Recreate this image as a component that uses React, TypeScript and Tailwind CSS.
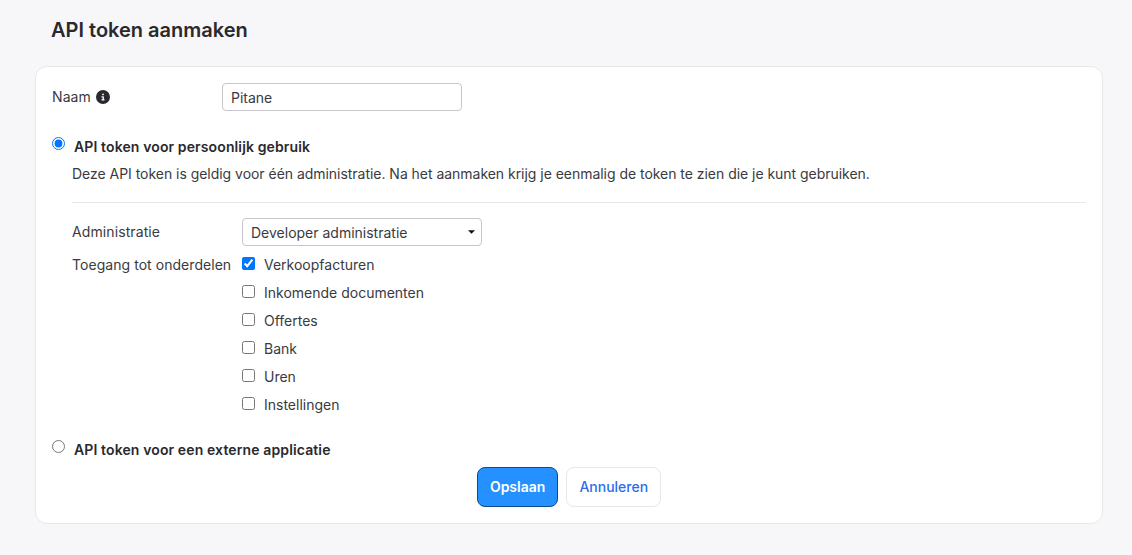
import React from 'react';

const onderdelen = [
  { label: 'Verkoopfacturen', checked: true },
  { label: 'Inkomende documenten', checked: false },
  { label: 'Offertes', checked: false },
  { label: 'Bank', checked: false },
  { label: 'Uren', checked: false },
  { label: 'Instellingen', checked: false },
];

const App = () => {
  return (
    <div className="min-h-screen bg-[#f7f7f9] px-[35px] pt-[18px] pb-[31px] text-[14px] leading-[20px] text-[#3a3a40] font-['Inter',sans-serif]">
      <h1 className="ml-[16px] h-[24px] text-[20px] leading-[24px] font-semibold text-[#29292e]">API token aanmaken</h1>

      <div className="mt-[24px] w-[1068px] h-[458px] rounded-[12px] border border-[#e8e8ec] bg-white px-[16px] pt-[16px]">
        {/* Naam */}
        <div className="flex items-start">
          <div className="flex w-[170px] items-center gap-[5px] pt-[4px]">
            <span className="tracking-[0.1px]">Naam</span>
            <svg viewBox="0 0 512 512" className="h-[14px] w-[14px] fill-[#29292e]">
              <path d="M256 512A256 256 0 1 0 256 0a256 256 0 1 0 0 512zM216 336h24V272H216c-13.3 0-24-10.700-24-24s10.700-24 24-24h48c13.300 0 24 10.700 24 24v88h8c13.300 0 24 10.700 24 24s-10.700 24-24 24H216c-13.300 0-24-10.700-24-24s10.700-24 24-24zm40-208a32 32 0 1 1 0 64 32 32 0 1 1 0-64z" />
            </svg>
          </div>
          <input
            defaultValue="Pitane"
            className="h-[28px] w-[240px] rounded-[4px] border border-[#c6c6cc] bg-white px-[8px] text-[14px] text-[#3a3a40] outline-none"
          />
        </div>

        {/* Persoonlijk gebruik */}
        <label className="mt-[24px] flex items-start">
          <input type="radio" name="soort" defaultChecked className="mt-[2px] h-[13px] w-[13px] m-0" />
          <span className="ml-[9px] pt-[2px] font-semibold tracking-[0.12px] text-[#29292e]">API token voor persoonlijk gebruik</span>
        </label>

        <div className="ml-[20px]">
          <p className="mt-[7px] tracking-[-0.033px]">
            Deze API token is geldig voor één administratie. Na het aanmaken krijg je eenmalig de token te zien die je kunt gebruiken.
          </p>
          <div className="mt-[18px] border-t border-[#e8e8ec]" />

          <div className="mt-[15px] flex items-start">
            <div className="w-[170px] pt-[4px] tracking-[0.1px]">Administratie</div>
            <div className="relative h-[28px] w-[240px]">
              <select className="h-[28px] w-[240px] appearance-none rounded-[4px] border border-[#c6c6cc] bg-white px-[8px] pt-[2px] text-[14px] text-[#3a3a40] outline-none">
                <option>Developer administratie</option>
              </select>
              {/* pijltje van de select */}
              <svg viewBox="0 0 8 4" className="pointer-events-none absolute right-[7px] top-[12px] h-[4px] w-[7px] fill-[#111]">
                <path d="M0 0h8L4 4z" />
              </svg>
            </div>
          </div>

          <div className="mt-[5px] flex items-start">
            <div className="w-[170px] pt-[4px] tracking-[0.05px]">Toegang tot onderdelen</div>
            <div className="flex flex-col gap-[8px] pt-[4px]">
              {onderdelen.map((onderdeel) => (
                <label key={onderdeel.label} className="flex items-start">
                  <input type="checkbox" defaultChecked={onderdeel.checked} className="mt-[2px] h-[13px] w-[13px] m-0" />
                  <span className="ml-[9px]">{onderdeel.label}</span>
                </label>
              ))}
            </div>
          </div>
        </div>

        {/* Externe applicatie */}
        <label className="mt-[23px] flex items-start">
          <input type="radio" name="soort" className="mt-[2px] h-[13px] w-[13px] m-0" />
          <span className="ml-[9px] pt-[2px] font-semibold tracking-[0.12px] text-[#29292e]">API token voor een externe applicatie</span>
        </label>

        <div className="mt-[7px] flex justify-center gap-[8px]">
          <button className="h-[40px] rounded-[8px] border border-[#0e4a86] bg-[#2590ff] px-[12px] font-semibold text-white">Opslaan</button>
          <button className="h-[40px] rounded-[8px] border border-[#e8e8ec] bg-white px-[12px] font-medium text-[#2b6cf0]">Annuleren</button>
        </div>
      </div>
    </div>
  );
};

export default App;
